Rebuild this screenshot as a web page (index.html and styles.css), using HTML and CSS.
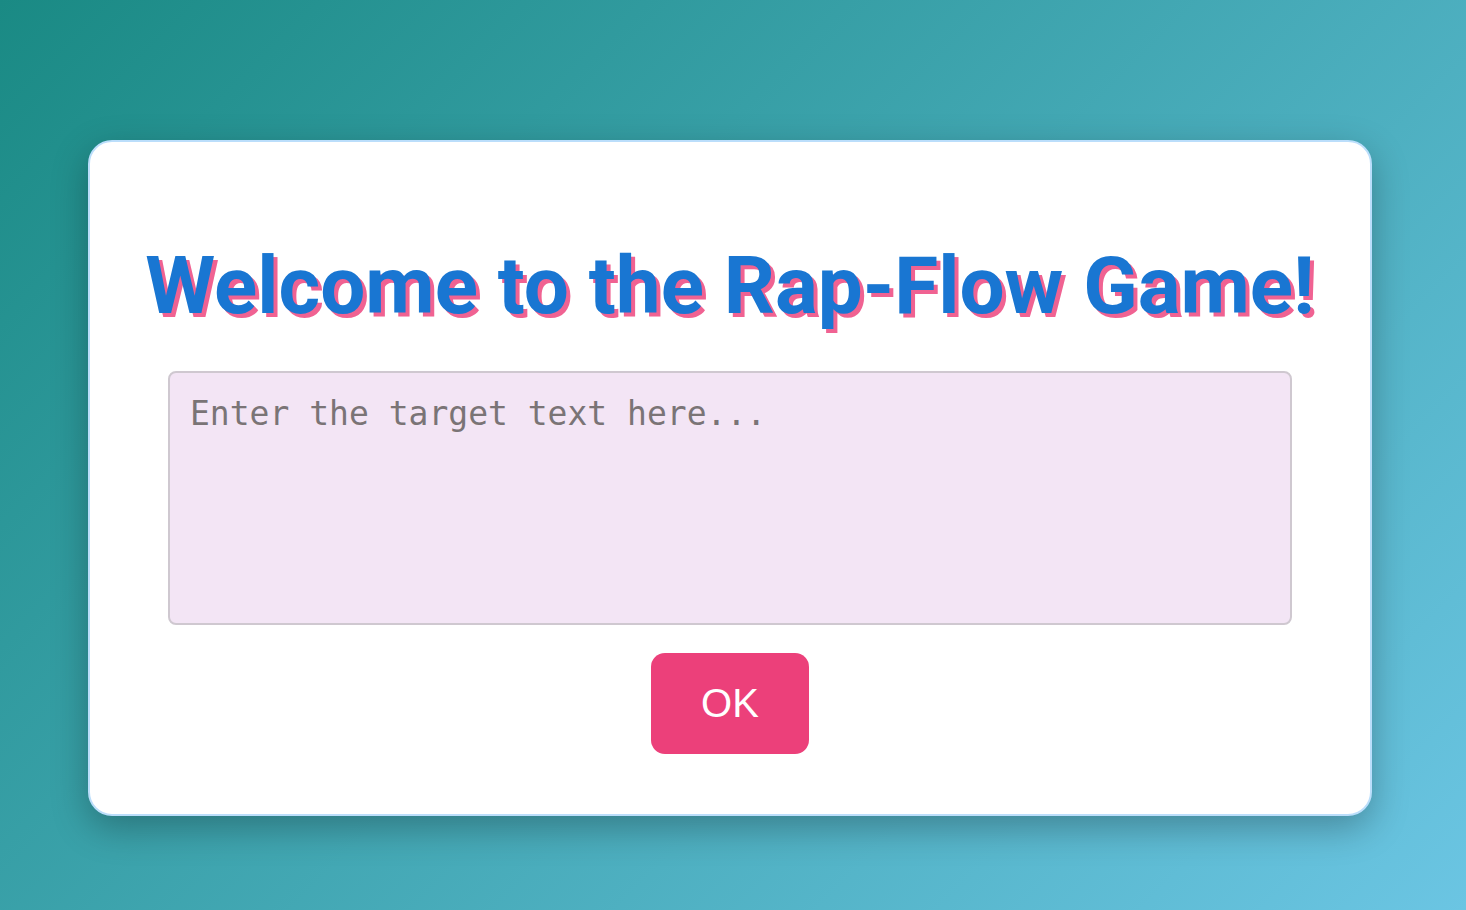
FILE: index.html
```html
<!DOCTYPE html>
<html lang="en">
<head>
<meta charset="utf-8">
<title>Rap-Flow Game</title>
<link rel="stylesheet" href="styles.css">
</head>
<body>
<main class="page">
  <section class="card">
    <h1 class="title">Welcome to the Rap-Flow Game!</h1>
    <textarea class="target" placeholder="Enter the target text here..."></textarea>
    <button class="ok" type="button">OK</button>
  </section>
</main>
</body>
</html>
```
FILE: styles.css
```css
html, body {
  margin: 0;
  padding: 0;
  height: 100%;
}
body {
  background: linear-gradient(135deg, #1a8a84 0%, #6bc5e3 100%);
  font-family: "Liberation Sans", Arial, sans-serif;
}
.page {
  height: 100%;
  box-sizing: border-box;
  padding: 140px 0 0 88px;
}
.card {
  box-sizing: border-box;
  width: 1284px;
  height: 676px;
  background: #fff;
  border: 2px solid #bbdefb;
  border-radius: 24px;
  box-shadow: 0 12px 36px rgba(0, 0, 0, 0.28);
  display: flex;
  flex-direction: column;
  align-items: center;
  padding: 96px 78px 0;
}
.title {
  margin: 0;
  font-family: Roboto, "Liberation Sans", sans-serif;
  font-weight: 700;
  font-size: 80px;
  line-height: 96px;
  letter-spacing: 0;
  color: #1976d2;
  text-shadow: 4px 4px 0 #f06292;
  white-space: nowrap;
}
.target {
  box-sizing: border-box;
  width: 100%;
  height: 254px;
  margin-top: 37px;
  background: #f3e5f5;
  border: 2px solid #cfc8d0;
  border-radius: 8px;
  padding: 20px 20px;
  font-family: "DejaVu Sans Mono", "Liberation Mono", monospace;
  font-size: 33px;
  line-height: 42px;
  color: #333;
  resize: none;
  outline: none;
}
.target::placeholder {
  color: #7a7476;
}
.ok {
  margin-top: 28px;
  width: 158px;
  height: 101px;
  border: none;
  border-radius: 14px;
  background: #ec407a;
  color: #fff;
  font-family: "Liberation Sans", Arial, sans-serif;
  font-size: 40px;
  cursor: pointer;
}
```
